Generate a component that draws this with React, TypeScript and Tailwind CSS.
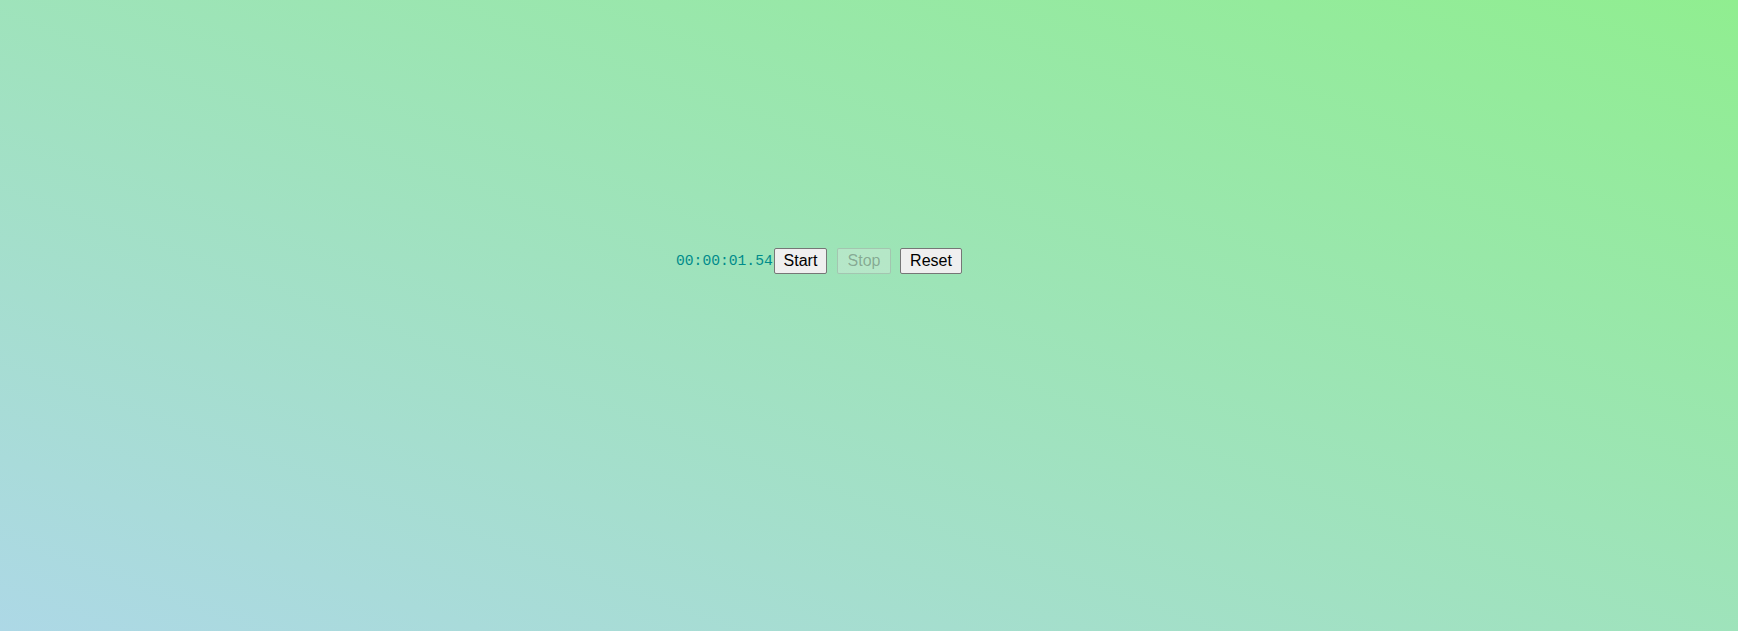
import React from "react";

export default function App() {
  return (
    <div className="w-[1738px] h-[631px] bg-[linear-gradient(to_top_right,#add8e6,#90ee90)] overflow-hidden">
      <div className="flex items-center pl-[676px] pt-[248px]">
        <span className="w-[98px] text-[14.67px] leading-[26px] text-[#008b8b] font-['Liberation_Mono',monospace]">
          00:00:01.54
        </span>
        <button className="h-[26px] w-[53px] flex items-center justify-center border border-[#767676] rounded-[2px] bg-[#efefef] text-[16px] text-black font-['Liberation_Sans',Arial,sans-serif]">
          Start
        </button>
        <button
          disabled
          className="ml-[10px] h-[26px] w-[54px] flex items-center justify-center border border-[rgba(118,118,118,0.3)] rounded-[2px] bg-[rgba(239,239,239,0.3)] text-[16px] text-[rgba(16,16,16,0.3)] font-['Liberation_Sans',Arial,sans-serif]"
        >
          Stop
        </button>
        <button className="ml-[9px] h-[26px] w-[62px] flex items-center justify-center border border-[#767676] rounded-[2px] bg-[#efefef] text-[16px] text-black font-['Liberation_Sans',Arial,sans-serif]">
          Reset
        </button>
      </div>
    </div>
  );
}
